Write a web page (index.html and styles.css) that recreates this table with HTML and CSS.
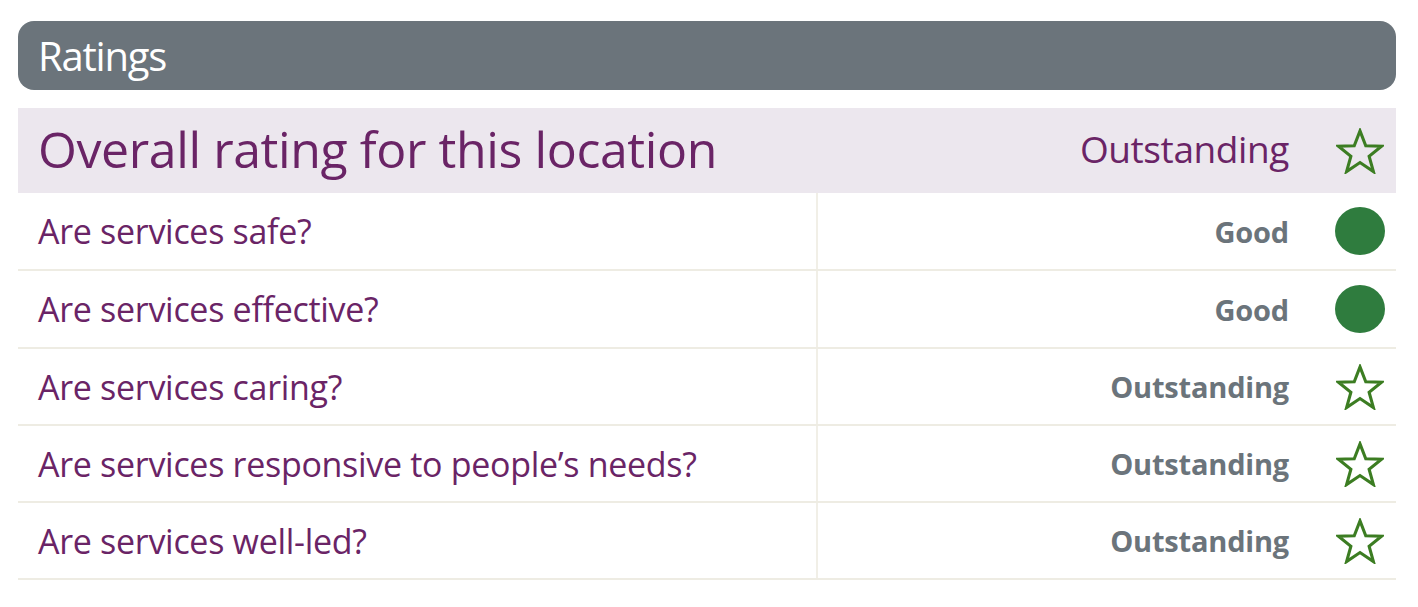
FILE: index.html
```html
<!DOCTYPE html>
<html>
<head>
<meta charset="utf-8">
<link rel="stylesheet" href="styles.css">
</head>
<body>
<div class="ratings">
  <h2 class="ratings-title">Ratings</h2>
  <div class="overall">
    <span class="overall-label">Overall rating for this location</span>
    <span class="overall-value">Outstanding</span>
    <span class="icon"><svg class="star" viewBox="0 0 50 48"><polygon points="25,3 31,18.5 47.5,19 34.5,29.5 39,45.5 25,36 11,45.5 15.5,29.5 2.5,19 19,18.5" /></svg></span>
  </div>
  <div class="table">
    <div class="row">
      <div class="q">Are services safe?</div>
      <div class="r"><span class="val">Good</span><span class="icon"><span class="dot"></span></span></div>
    </div>
    <div class="row">
      <div class="q">Are services effective?</div>
      <div class="r"><span class="val">Good</span><span class="icon"><span class="dot"></span></span></div>
    </div>
    <div class="row">
      <div class="q">Are services caring?</div>
      <div class="r"><span class="val">Outstanding</span><span class="icon"><svg class="star" viewBox="0 0 50 48"><polygon points="25,3 31,18.5 47.5,19 34.5,29.5 39,45.5 25,36 11,45.5 15.5,29.5 2.5,19 19,18.5" /></svg></span></div>
    </div>
    <div class="row">
      <div class="q">Are services responsive to people’s needs?</div>
      <div class="r"><span class="val">Outstanding</span><span class="icon"><svg class="star" viewBox="0 0 50 48"><polygon points="25,3 31,18.5 47.5,19 34.5,29.5 39,45.5 25,36 11,45.5 15.5,29.5 2.5,19 19,18.5" /></svg></span></div>
    </div>
    <div class="row">
      <div class="q">Are services well-led?</div>
      <div class="r"><span class="val">Outstanding</span><span class="icon"><svg class="star" viewBox="0 0 50 48"><polygon points="25,3 31,18.5 47.5,19 34.5,29.5 39,45.5 25,36 11,45.5 15.5,29.5 2.5,19 19,18.5" /></svg></span></div>
    </div>
  </div>
</div>
</body>
</html>
```

FILE: styles.css
```css
html, body {
  margin: 0;
  padding: 0;
  background: #ffffff;
}
body {
  font-family: "Open Sans", "Noto Sans", sans-serif;
}
.ratings {
  margin: 21px 22px 0 18px;
  width: 1378px;
}
.ratings-title {
  margin: 0;
  height: 69px;
  box-sizing: border-box;
  background: #6b747b;
  color: #ffffff;
  border-radius: 16px;
  font-weight: 400;
  font-size: 40px;
  letter-spacing: -1.2px;
  line-height: 69px;
  padding-left: 20px;
}
.overall {
  margin-top: 18px;
  height: 85px;
  background: #ece7ee;
  display: flex;
  align-items: center;
  padding-left: 20px;
  padding-right: 11px;
}
.overall-label {
  flex: 1;
  color: #6a2466;
  font-size: 50px;
  letter-spacing: -0.4px;
  margin-top: -4px;
}
.overall-value {
  color: #6a2466;
  font-size: 37px;
  letter-spacing: -0.4px;
  margin-top: -4px;
}
.icon {
  width: 50px;
  height: 50px;
  margin-left: 46px;
  display: flex;
  align-items: center;
  justify-content: center;
}
.star {
  width: 48px;
  height: 46px;
  fill: none;
  stroke: #3c7d22;
  stroke-width: 3.2;
  stroke-linejoin: miter;
}
.dot {
  width: 50px;
  height: 48px;
  border-radius: 50%;
  background: #2f7c3e;
}
.row {
  display: flex;
  height: 75px;
  border-bottom: 2px solid #eeece3;
}
.row:first-child {
  height: 76px;
}
.row:nth-child(2) {
  height: 76px;
}
.q {
  width: 800px;
  box-sizing: border-box;
  border-right: 2px solid #f1efe7;
  display: flex;
  align-items: center;
  padding-left: 20px;
  color: #6a2466;
  font-size: 34px;
  letter-spacing: -0.3px;
}
.r {
  flex: 1;
  display: flex;
  align-items: center;
  justify-content: flex-end;
  padding-right: 11px;
}
.val {
  color: #6b747b;
  font-weight: 700;
  font-size: 29px;
  letter-spacing: -0.2px;
}
```
